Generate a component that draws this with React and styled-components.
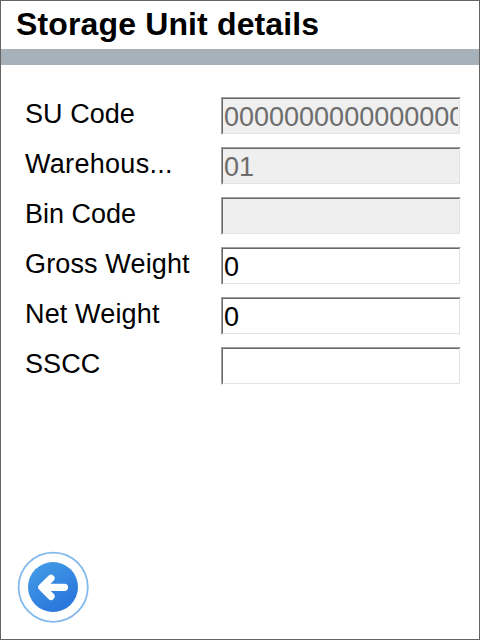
import React from "react";
import styled, { createGlobalStyle } from "styled-components";

const GlobalStyle = createGlobalStyle`
  * { box-sizing: border-box; }
  body { margin: 0; background: #fff; }
`;

const Screen = styled.main`
  display: flex;
  flex-direction: column;
  width: 480px;
  height: 640px;
  border: 1px solid #646464;
  background: #fff;
  color: #000;
  font-family: "Liberation Sans", Arial, sans-serif;
  font-size: 27px;
  overflow: hidden;
`;

const Header = styled.header`
  flex: none;
  height: 64px;
  padding-left: 15px;
  border-bottom: 16px solid #a7b1ba;
`;

const Title = styled.h1`
  margin: 0;
  font-size: 32px;
  line-height: 46px;
  font-weight: 700;
  letter-spacing: 0.14px;
  white-space: nowrap;
`;

const Form = styled.form`
  display: flex;
  flex-direction: column;
  gap: 12px;
  padding: 32px 18px 0 24px;
`;

const Row = styled.label`
  display: grid;
  grid-template-columns: 196px 240px;
  height: 38px;
`;

const Label = styled.span`
  line-height: 34px;
  letter-spacing: ${({ $tracking }) => $tracking}px;
  white-space: nowrap;
`;

const Field = styled.span`
  display: flex;
  border: 1px solid;
  border-color: #a0a0a0 #fff #fff #a0a0a0;
`;

const Input = styled.input`
  width: 100%;
  min-width: 0;
  height: 36px;
  margin: 0;
  padding: 2px 1px 0;
  border: 1px solid;
  border-color: #696969 #e3e3e3 #e3e3e3 #696969;
  border-radius: 0;
  outline: none;
  background: #fff;
  color: #000;
  font: inherit;

  &:disabled {
    background: #efefef;
    color: #6d6d6d;
  }
`;

const Footer = styled.footer`
  display: flex;
  margin-top: auto;
  padding: 0 0 16px 16px;
`;

const BackButton = styled.button`
  display: flex;
  padding: 0;
  border: 0;
  background: none;
`;

const fields = [
  { label: "SU Code", value: "000000000000000000", disabled: true, tracking: 0.05 },
  { label: "Warehous...", value: "01", disabled: true, tracking: 0.3 },
  { label: "Bin Code", value: "", disabled: true, tracking: 0 },
  { label: "Gross Weight", value: "0", tracking: 0.14 },
  { label: "Net Weight", value: "0", tracking: 0.15 },
  { label: "SSCC", value: "", tracking: 0.1 },
];

function BackIcon() {
  return (
    <svg width="72" height="72" viewBox="0 0 72 72" fill="none">
      <defs>
        <linearGradient id="disc" x1="22" y1="14" x2="50" y2="59" gradientUnits="userSpaceOnUse">
          <stop stopColor="#4299e6" />
          <stop offset="1" stopColor="#2874db" />
        </linearGradient>
      </defs>
      <circle cx="36.2" cy="36.2" r="34.6" stroke="#83b9ed" strokeWidth="1.8" />
      <circle cx="36" cy="36" r="25" fill="url(#disc)" />
      <path d="M34 27.2L24.8 36.3L34 45.4M26 36.3H47.5" stroke="#fff" strokeWidth="7.2" strokeLinecap="round" strokeLinejoin="round" />
    </svg>
  );
}

export default function App() {
  return (
    <Screen>
      <GlobalStyle />
      <Header>
        <Title>Storage Unit details</Title>
      </Header>
      <Form>
        {fields.map(({ label, value, disabled, tracking }) => (
          <Row key={label}>
            <Label $tracking={tracking}>{label}</Label>
            <Field>
              <Input type="text" defaultValue={value} disabled={disabled} />
            </Field>
          </Row>
        ))}
      </Form>
      <Footer>
        <BackButton type="button" aria-label="Back">
          <BackIcon />
        </BackButton>
      </Footer>
    </Screen>
  );
}
